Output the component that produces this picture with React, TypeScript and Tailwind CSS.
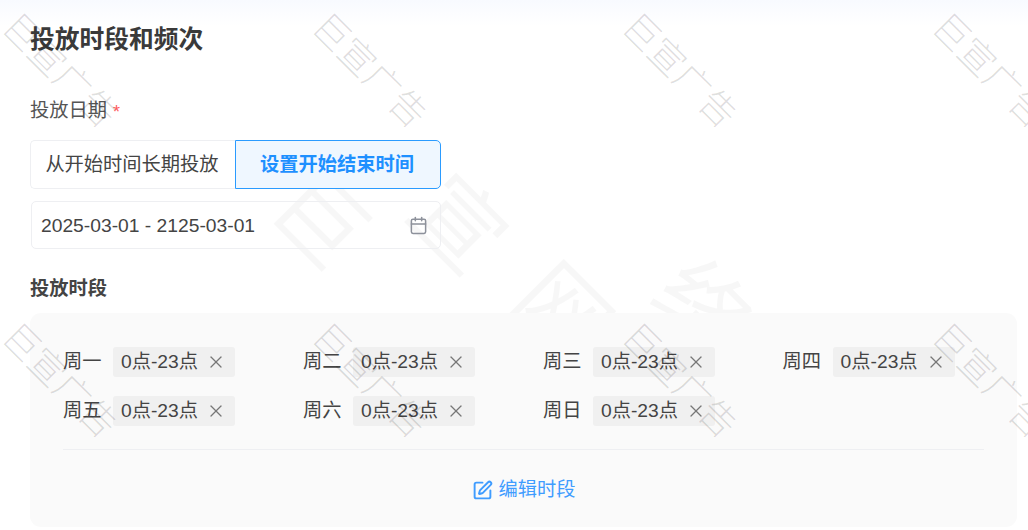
import { Calendar, SquarePen, X } from "lucide-react";

const font = "font-['Liberation_Sans','Noto_Sans_CJK_SC',sans-serif]";

const days = ["周一", "周二", "周三", "周四", "周五", "周六", "周日"];
const cells = Array.from({ length: 8 }, (_, i) => i);

function DayItem({ day }: { day: string }) {
  return (
    <div className="flex items-center h-[30px]">
      <span className="w-[50px] text-[#444]">{day}</span>
      <span className="flex items-center w-[122px] h-[30px] pl-2 rounded-[3px] bg-[#f0f0f0] text-[#444]">
        <span className="w-[77px] whitespace-nowrap">0点-23点</span>
        <X size={20} strokeWidth={1.5} className="ml-[8px] text-[#777]" />
      </span>
    </div>
  );
}

export default function App() {
  return (
    <div
      className={`relative w-[1028px] h-[530px] overflow-hidden bg-[linear-gradient(#f8faff,#ffffff_26px)] text-[19.25px] ${font}`}
    >
      {/* big faint watermark */}
      <div className="absolute inset-0 pointer-events-none font-['Noto_Sans_CJK_SC',sans-serif] text-[90px] leading-none font-normal text-[rgba(0,0,0,0.03)]">
        <span className="absolute left-[280px] top-[170px] rotate-45">巨</span>
        <span className="absolute left-[418px] top-[174px] rotate-45">宣</span>
        <span className="absolute left-[523px] top-[262px] rotate-45">网</span>
        <span className="absolute left-[662px] top-[258px] rotate-45">络</span>
      </div>

      <div className="relative pl-[30px] pr-[11px] pt-[23px]">
        <h1 className="h-[34px] leading-[34px] text-[24.75px] font-bold text-[#3a3a3a]">投放时段和频次</h1>

        <div className="mt-[41px] h-[26px] leading-[26px] text-[#555] flex items-center">
          投放日期
          <span className="ml-[6px] text-[18px] leading-none pt-[2px] text-[#ff5a5c]">*</span>
        </div>

        <div className="mt-[16px] flex w-[411px] h-[49px]">
          <div className="flex items-center justify-center w-[205px] pt-[2px] pr-[2px] bg-white border border-r-0 border-[#eeeff2] rounded-l-[5px] text-[#444]">
            从开始时间长期投放
          </div>
          <div className="flex items-center justify-center w-[206px] pt-[2px] pr-[2px] bg-[#eff7ff] border-[1.5px] border-[#2a9bff] rounded-r-[5px] text-[#1e90ff] font-bold">
            设置开始结束时间
          </div>
        </div>

        <div className="mt-3 ml-px flex items-center justify-between w-[410px] h-[48px] pl-[9px] pr-[12px] border border-[#eeeff2] rounded-[5px] text-[#444]">
          <span className="pt-[2px]">2025-03-01 - 2125-03-01</span>
          <Calendar size={19} strokeWidth={1.9} className="text-[#8d919b]" />
        </div>

        <div className="mt-[26px] h-[26px] leading-[26px] pt-px text-[#444] font-bold">投放时段</div>

        <div className="mt-3 h-[214px] rounded-[11px] bg-[#fafafa]/90 pt-[34px] px-[33px]">
          <div className="grid grid-cols-[240px_240px_239.6px_auto] gap-y-[19px]">
            {days.map((d) => (
              <DayItem key={d} day={d} />
            ))}
          </div>
          <div className="mt-[23px] h-px bg-[#eeeff2]" />
          <div className="mt-[26px] flex items-center justify-center gap-[6px] text-[#3f9cff]">
            <SquarePen size={21} strokeWidth={2.2} />
            <span>编辑时段</span>
          </div>
        </div>
      </div>

      {/* small repeating watermark */}
      <div className="absolute inset-0 pointer-events-none grid grid-cols-[repeat(4,310px)] auto-rows-[310px]">
        {cells.map((i) => (
          <div key={i} className="relative">
            <span className="absolute left-[-10px] top-[50px] rotate-45 whitespace-nowrap font-['Noto_Sans_CJK_SC',sans-serif] text-[36px] leading-none font-light text-[rgba(0,0,0,0.13)]">
              巨宣广告
            </span>
          </div>
        ))}
      </div>
    </div>
  );
}
